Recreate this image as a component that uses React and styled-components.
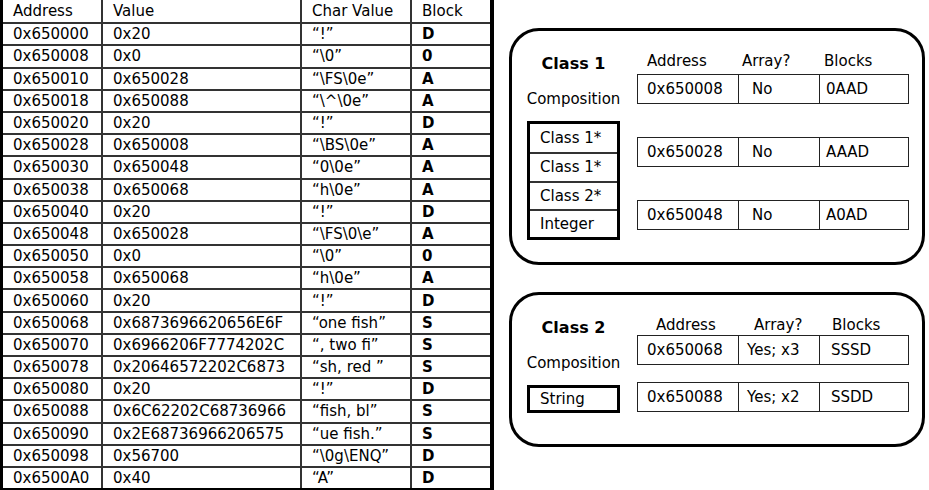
import React from "react";
import styled, { createGlobalStyle } from "styled-components";

const GlobalStyle = createGlobalStyle`
  html, body { margin: 0; padding: 0; background: #fff; }
  body { font-family: "DejaVu Sans", "Liberation Sans", sans-serif; color: #000; }
`;

const Page = styled.div`
  display: flex;
  align-items: flex-start;
  width: 929px;
  height: 490px;
  overflow: hidden;
  font-size: 15px;
`;

const MemTable = styled.div`
  width: 494px;
  box-sizing: border-box;
  border-left: 3px solid #000;
  border-right: 4px solid #000;
  border-bottom: 3px solid #000;
  display: flex;
  flex-direction: column;
  flex: none;
`;

const MemRow = styled.div`
  display: grid;
  grid-template-columns: 100px 199px 110px 1fr;
  height: 22.2px;
  box-sizing: border-box;
  border-top: ${(p) => (p.$first ? "none" : "2px solid #333")};
`;

const MemCell = styled.div`
  display: flex;
  align-items: center;
  padding-left: 10px;
  box-sizing: border-box;
  white-space: pre;
  font-weight: ${(p) => (p.$bold ? 700 : 400)};
  border-right: ${(p) => (p.$last ? "none" : "2px solid #333")};
`;

const Side = styled.div`
  display: flex;
  flex-direction: column;
  gap: 27px;
  margin-left: 15px;
  padding-top: 28px;
  width: 416px;
  flex: none;
`;

const ClassBox = styled.section`
  box-sizing: border-box;
  height: ${(p) => p.$height}px;
  border: 3px solid #000;
  border-radius: 30px;
  padding: 20px 13px 0 15px;
  display: flex;
  gap: 17px;
`;

const LeftCol = styled.div`
  width: 93px;
  display: flex;
  flex-direction: column;
  align-items: center;
  flex: none;
`;

const Title = styled.div`
  margin-top: 3px;
  font-size: 16px;
  font-weight: 700;
  line-height: 20px;
`;

const Label = styled.div`
  margin-top: 15px;
  line-height: 20px;
`;

const CompList = styled.div`
  margin-top: 12px;
  align-self: stretch;
  border: 3px solid #000;
  display: flex;
  flex-direction: column;
`;

const CompItem = styled.div`
  height: ${(p) => p.$h}px;
  box-sizing: border-box;
  display: flex;
  align-items: center;
  padding-left: 10px;
  border-top: ${(p) => (p.$first ? "none" : "2px solid #333")};
`;

const RightCol = styled.div`
  width: 272px;
  display: flex;
  flex-direction: column;
  gap: ${(p) => p.$gap}px;
`;

const HeaderRow = styled.div`
  display: grid;
  grid-template-columns: 100px 81px 91px;
  line-height: 20px;
  margin-bottom: ${(p) => p.$after - p.$gap}px;
`;

const HeadCell = styled.div`
  padding-left: ${(p) => p.$pad}px;
`;

const DataRow = styled.div`
  display: grid;
  grid-template-columns: 100px 81px 91px;
  height: 30px;
  box-sizing: border-box;
  border: 1px solid #222;
`;

const DataCell = styled.div`
  display: flex;
  align-items: center;
  padding-left: ${(p) => p.$pad}px;
  border-left: ${(p) => (p.$first ? "none" : "1px solid #222")};
  margin-left: ${(p) => (p.$first ? "-1px" : "0")};
`;

const rows = [
  ["0x650000", "0x20", "“!”", "D"],
  ["0x650008", "0x0", "“\\0”", "0"],
  ["0x650010", "0x650028", "“\\FS\\0e”", "A"],
  ["0x650018", "0x650088", "“\\^\\0e”", "A"],
  ["0x650020", "0x20", "“!”", "D"],
  ["0x650028", "0x650008", "“\\BS\\0e”", "A"],
  ["0x650030", "0x650048", "“0\\0e”", "A"],
  ["0x650038", "0x650068", "“h\\0e”", "A"],
  ["0x650040", "0x20", "“!”", "D"],
  ["0x650048", "0x650028", "“\\FS\\0\\e”", "A"],
  ["0x650050", "0x0", "“\\0”", "0"],
  ["0x650058", "0x650068", "“h\\0e”", "A"],
  ["0x650060", "0x20", "“!”", "D"],
  ["0x650068", "0x6873696620656E6F", "“one fish”", "S"],
  ["0x650070", "0x6966206F7774202C", "“, two fi”", "S"],
  ["0x650078", "0x20646572202C6873", "“sh, red ”", "S"],
  ["0x650080", "0x20", "“!”", "D"],
  ["0x650088", "0x6C62202C68736966", "“fish, bl”", "S"],
  ["0x650090", "0x2E68736966206575", "“ue fish.”", "S"],
  ["0x650098", "0x56700", "“\\0g\\ENQ”", "D"],
  ["0x6500A0", "0x40", "“A”", "D"],
];

const classes = [
  {
    name: "Class 1",
    height: 237,
    comp: ["Class 1*", "Class 1*", "Class 2*", "Integer"],
    itemH: 28.25,
    headPads: [10, 5, 6],
    dataPads: [10, 13, 6],
    after: 3,
    gap: 33,
    data: [
      ["0x650008", "No", "0AAD"],
      ["0x650028", "No", "AAAD"],
      ["0x650048", "No", "A0AD"],
    ],
  },
  {
    name: "Class 2",
    height: 155,
    comp: ["String"],
    itemH: 22,
    headPads: [19, 17, 14],
    dataPads: [10, 8, 11],
    after: 0,
    gap: 17,
    data: [
      ["0x650068", "Yes; x3", "SSSD"],
      ["0x650088", "Yes; x2", "SSDD"],
    ],
  },
];

export default function App() {
  return (
    <Page>
      <GlobalStyle />
      <MemTable>
        <MemRow $first>
          <MemCell>Address</MemCell>
          <MemCell>Value</MemCell>
          <MemCell>Char Value</MemCell>
          <MemCell $last>Block</MemCell>
        </MemRow>
        {rows.map((r, i) => (
          <MemRow key={i}>
            <MemCell>{r[0]}</MemCell>
            <MemCell>{r[1]}</MemCell>
            <MemCell>{r[2]}</MemCell>
            <MemCell $last $bold>
              {r[3]}
            </MemCell>
          </MemRow>
        ))}
      </MemTable>
      <Side>
        {classes.map((c) => (
          <ClassBox key={c.name} $height={c.height}>
            <LeftCol>
              <Title>{c.name}</Title>
              <Label>Composition</Label>
              <CompList>
                {c.comp.map((t, i) => (
                  <CompItem key={i} $first={i === 0} $h={c.itemH}>
                    {t}
                  </CompItem>
                ))}
              </CompList>
            </LeftCol>
            <RightCol $gap={c.gap}>
              <HeaderRow $after={c.after} $gap={c.gap}>
                <HeadCell $pad={c.headPads[0]}>Address</HeadCell>
                <HeadCell $pad={c.headPads[1]}>Array?</HeadCell>
                <HeadCell $pad={c.headPads[2]}>Blocks</HeadCell>
              </HeaderRow>
              {c.data.map((d, i) => (
                <DataRow key={i}>
                  {d.map((v, j) => (
                    <DataCell key={j} $first={j === 0} $pad={c.dataPads[j]}>
                      {v}
                    </DataCell>
                  ))}
                </DataRow>
              ))}
            </RightCol>
          </ClassBox>
        ))}
      </Side>
    </Page>
  );
}
